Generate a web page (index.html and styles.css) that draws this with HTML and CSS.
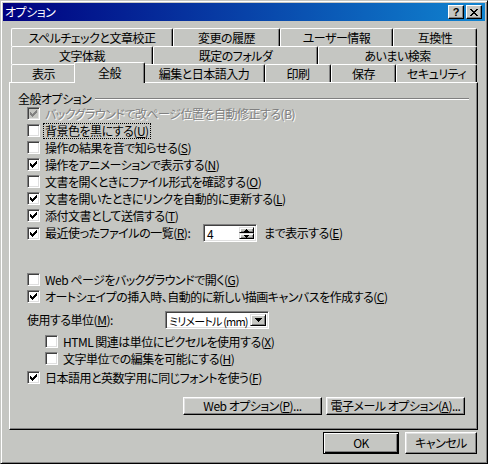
FILE: index.html
```html
<!DOCTYPE html>
<html lang="ja">
<head>
    <meta charset="UTF-8">
    <title>オプション</title>
    <link rel="stylesheet" href="styles.css">
</head>
<body>
<div class="window">
    <div class="titlebar">
        <span class="title">オプション</span>
        <div class="caption-buttons">
            <span class="cap-btn help">?</span>
            <span class="cap-btn close">
                <svg width="8" height="7" viewBox="0 0 8 7"><path d="M0 0h2v1H0zM6 0h2v1H6zM1 1h2v1H1zM5 1h2v1H5zM2 2h4v1H2zM3 3h2v1H3zM2 4h4v1H2zM1 5h2v1H1zM5 5h2v1H5zM0 6h2v1H0zM6 6h2v1H6z"/></svg>
            </span>
        </div>
    </div>

    <div class="tabs">
        <div class="tab-row row-1">
            <div class="tab">スペルチェックと文章校正</div>
            <div class="tab">変更の履歴</div>
            <div class="tab">ユーザー情報</div>
            <div class="tab">互換性</div>
        </div>
        <div class="tab-row row-2">
            <div class="tab">文字体裁</div>
            <div class="tab">既定のフォルダ</div>
            <div class="tab">あいまい検索</div>
        </div>
        <div class="tab-row row-3">
            <div class="tab">表示</div>
            <div class="tab selected">全般</div>
            <div class="tab">編集と日本語入力</div>
            <div class="tab">印刷</div>
            <div class="tab">保存</div>
            <div class="tab">セキュリティ</div>
        </div>
    </div>

    <div class="panel">
        <div class="group-head">
            <span class="group-label">全般オプション</span>
            <span class="group-line"></span>
        </div>

        <div class="opt disabled">
            <span class="check"><svg width="7" height="7" viewBox="0 0 7 7"><path d="M0 2h1v1h1v1h1v-1h1v-1h1v-1h1v-1h1v3h-1v1h-1v1h-1v1h-1v1h-1v-1h-1v-1h-1z"/></svg></span>
            <span class="label">バックグラウンドで改ページ位置を自動修正する(B)</span>
        </div>
        <div class="opt">
            <span class="check"></span>
            <span class="label focus">背景色を黒にする(<u>U</u>)</span>
        </div>
        <div class="opt">
            <span class="check"></span>
            <span class="label">操作の結果を音で知らせる(<u>S</u>)</span>
        </div>
        <div class="opt">
            <span class="check"><svg width="7" height="7" viewBox="0 0 7 7"><path d="M0 2h1v1h1v1h1v-1h1v-1h1v-1h1v-1h1v3h-1v1h-1v1h-1v1h-1v1h-1v-1h-1v-1h-1z"/></svg></span>
            <span class="label">操作をアニメーションで表示する(<u>N</u>)</span>
        </div>
        <div class="opt">
            <span class="check"></span>
            <span class="label">文書を開くときにファイル形式を確認する(<u>O</u>)</span>
        </div>
        <div class="opt">
            <span class="check"><svg width="7" height="7" viewBox="0 0 7 7"><path d="M0 2h1v1h1v1h1v-1h1v-1h1v-1h1v-1h1v3h-1v1h-1v1h-1v1h-1v1h-1v-1h-1v-1h-1z"/></svg></span>
            <span class="label">文書を開いたときにリンクを自動的に更新する(<u>L</u>)</span>
        </div>
        <div class="opt">
            <span class="check"><svg width="7" height="7" viewBox="0 0 7 7"><path d="M0 2h1v1h1v1h1v-1h1v-1h1v-1h1v-1h1v3h-1v1h-1v1h-1v1h-1v1h-1v-1h-1v-1h-1z"/></svg></span>
            <span class="label">添付文書として送信する(<u>T</u>)</span>
        </div>
        <div class="opt recent">
            <span class="check"><svg width="7" height="7" viewBox="0 0 7 7"><path d="M0 2h1v1h1v1h1v-1h1v-1h1v-1h1v-1h1v3h-1v1h-1v1h-1v1h-1v1h-1v-1h-1v-1h-1z"/></svg></span>
            <span class="label recent-label">最近使ったファイルの一覧(<u>R</u>):</span>
            <span class="spin">
                <span class="spin-value">4</span>
                <span class="spin-btns">
                    <span class="spin-btn"><svg width="5" height="3" viewBox="0 0 5 3"><path d="M2 0h1v1h1v1h1v1H0V2h1V1h1z"/></svg></span>
                    <span class="spin-btn"><svg width="5" height="3" viewBox="0 0 5 3"><path d="M0 0h5v1H4v1H3v1H2V2H1V1H0z"/></svg></span>
                </span>
            </span>
            <span class="after-spin">まで表示する(<u>E</u>)</span>
        </div>

        <div class="opt web-bg">
            <span class="check"></span>
            <span class="label">Web ページをバックグラウンドで開く(<u>G</u>)</span>
        </div>
        <div class="opt">
            <span class="check"><svg width="7" height="7" viewBox="0 0 7 7"><path d="M0 2h1v1h1v1h1v-1h1v-1h1v-1h1v-1h1v3h-1v1h-1v1h-1v1h-1v1h-1v-1h-1v-1h-1z"/></svg></span>
            <span class="label">オートシェイプの挿入時、自動的に新しい描画キャンバスを作成する(<u>C</u>)</span>
        </div>

        <div class="opt unit">
            <span class="unit-label">使用する単位(<u>M</u>):</span>
            <span class="combo">
                <span class="combo-value">ミリメートル (mm)</span>
                <span class="combo-btn"><svg width="7" height="4" viewBox="0 0 7 4"><path d="M0 0h7v1H6v1H5v1H4v1H3V3H2V2H1V1H0z"/></svg></span>
            </span>
        </div>
        <div class="opt sub first-sub">
            <span class="check"></span>
            <span class="label">HTML 関連は単位にピクセルを使用する(<u>X</u>)</span>
        </div>
        <div class="opt sub">
            <span class="check"></span>
            <span class="label">文字単位での編集を可能にする(<u>H</u>)</span>
        </div>
        <div class="opt same-font">
            <span class="check"><svg width="7" height="7" viewBox="0 0 7 7"><path d="M0 2h1v1h1v1h1v-1h1v-1h1v-1h1v-1h1v3h-1v1h-1v1h-1v1h-1v1h-1v-1h-1v-1h-1z"/></svg></span>
            <span class="label">日本語用と英数字用に同じフォントを使う(<u>F</u>)</span>
        </div>

        <div class="panel-buttons">
            <button class="btn wide">Web オプション(<u>P</u>)...</button>
            <button class="btn wide">電子メール オプション(<u>A</u>)...</button>
        </div>
    </div>

    <div class="footer">
        <button class="btn default ok">OK</button>
        <button class="btn cancel">キャンセル</button>
    </div>
</div>
</body>
</html>
```

FILE: styles.css
```css
* {
    box-sizing: border-box;
}
body {
    margin: 0;
    background: #c5c6c2;
    color: #000;
    font-family: "Noto Sans CJK JP", "Noto Sans", sans-serif;
    font-size: 12px;
    line-height: 14px;
    letter-spacing: -0.5px;
    font-feature-settings: "palt" 1;
}
svg {
    display: block;
    shape-rendering: crispEdges;
    fill: currentColor;
}

/* window frame */
.window {
    width: 488px;
    height: 464px;
    padding: 2px;
    background: #c5c6c2;
    border: 1px solid;
    border-color: #c5c6c2 #000 #000 #c5c6c2;
    box-shadow: inset 1px 1px #fff, inset -1px -1px #808080;
}
.titlebar {
    display: flex;
    align-items: center;
    height: 18px;
    padding: 0 3px 0 2px;
    background: linear-gradient(to right, #000080, #1084d0);
}
.title {
    color: #fff;
}
.caption-buttons {
    display: flex;
    gap: 2px;
    margin-left: auto;
}
.cap-btn {
    display: flex;
    align-items: center;
    justify-content: center;
    width: 16px;
    height: 14px;
    background: #c5c6c2;
    border: 1px solid;
    border-color: #fff #000 #000 #fff;
    box-shadow: inset -1px -1px #808080;
}
.help {
    font-family: "Liberation Sans", sans-serif;
    font-weight: bold;
    font-size: 11px;
    line-height: 12px;
    letter-spacing: 0;
}

/* tabs */
.tabs {
    width: 466px;
    margin: 7px 0 0 8px;
}
.tab-row {
    display: grid;
    grid-template-rows: 18px;
}
.row-1 {
    grid-template-columns: 162px 107px 113px 84px;
}
.row-2 {
    grid-template-columns: 142px 165px 159px;
}
.row-3 {
    grid-template-columns: 65px 67px 122px 66px 65px 81px;
}
.tab {
    background: #c5c6c2;
    border-top: 1px solid #fff;
    border-left: 1px solid #fff;
    border-right: 1px solid #000;
    border-radius: 2px 2px 0 0;
    box-shadow: inset -1px 0 #808080;
    text-align: center;
    line-height: 17px;
    white-space: nowrap;
}
.tab.selected {
    position: relative;
    z-index: 1;
    height: 21px;
    margin: -2px -2px 0;
    line-height: 19px;
}

/* page */
.panel {
    width: 469px;
    height: 348px;
    margin-left: 6px;
    padding-top: 9px;
    border: 1px solid;
    border-color: #fff #000 #000 #fff;
    box-shadow: inset -1px -1px #808080;
}
.group-head {
    display: flex;
    align-items: center;
    height: 13px;
    margin: 0 8px;
}
.group-line {
    flex: 1;
    margin-left: 4px;
    border-top: 1px solid #808080;
    border-bottom: 1px solid #fff;
}
.opt {
    display: flex;
    align-items: center;
    height: 17px;
    margin-left: 17px;
    white-space: nowrap;
}
.check {
    flex: none;
    width: 13px;
    height: 13px;
    background: #fff;
    border: 1px solid;
    border-color: #808080 #fff #fff #808080;
    box-shadow: inset 1px 1px #404040, inset -1px -1px #dfdfdf;
}
.check svg {
    margin: 2px;
}
.label {
    margin-left: 4px;
    padding: 0 1px;
}
.focus {
    outline: 1px dotted #000;
}
.disabled .label {
    color: #808080;
    text-shadow: 1px 1px 0 #fff;
}
.disabled .check {
    background: #c5c6c2;
    color: #808080;
}

.recent {
    height: 18px;
}
.recent-label {
    width: 159px;
}
.spin,
.combo {
    display: flex;
    height: 18px;
    padding: 2px;
    background: #fff;
    border: 1px solid;
    border-color: #808080 #fff #fff #808080;
    box-shadow: inset 1px 1px #404040, inset -1px -1px #dfdfdf;
}
.spin {
    width: 54px;
}
.spin-value {
    flex: 1;
    padding-left: 1px;
}
.spin-btns {
    display: flex;
    flex-direction: column;
    width: 15px;
}
.spin-btn,
.combo-btn {
    display: flex;
    align-items: center;
    justify-content: center;
    background: #c5c6c2;
    border: 1px solid;
    border-color: #dfdfdf #000 #000 #dfdfdf;
    box-shadow: inset 1px 1px #fff, inset -1px -1px #808080;
}
.spin-btn {
    height: 7px;
}
.after-spin {
    margin-left: 7px;
}

.web-bg {
    margin-top: 29px;
}
.unit {
    height: 18px;
    margin-top: 6px;
}
.unit-label {
    width: 138px;
}
.combo {
    width: 104px;
}
.combo-value {
    flex: 1;
    padding-left: 1px;
    font-size: 11px;
    letter-spacing: -0.8px;
    white-space: nowrap;
}
.combo-btn {
    flex: none;
    width: 16px;
}
.sub {
    margin-left: 35px;
}
.first-sub {
    margin-top: 4px;
}
.same-font {
    margin-top: 2px;
}

/* buttons */
.btn {
    padding: 0;
    font: inherit;
    letter-spacing: inherit;
    color: #000;
    background: #c5c6c2;
    border: 1px solid;
    border-color: #fff #000 #000 #fff;
    box-shadow: inset -1px -1px #808080, inset 1px 1px #dfdfdf;
    white-space: nowrap;
}
.panel-buttons {
    display: flex;
    gap: 4px;
    margin: 11px 0 0 173px;
}
.wide {
    width: 139px;
    height: 18px;
}
.footer {
    display: flex;
    gap: 6px;
    margin: 2px 0 0 320px;
}
.footer .btn {
    height: 22px;
}
.ok {
    width: 76px;
}
.cancel {
    width: 72px;
}
.btn.default {
    border: 1px solid #000;
    box-shadow: inset 1px 1px #fff, inset -1px -1px #000, inset -2px -2px #808080;
}
```
